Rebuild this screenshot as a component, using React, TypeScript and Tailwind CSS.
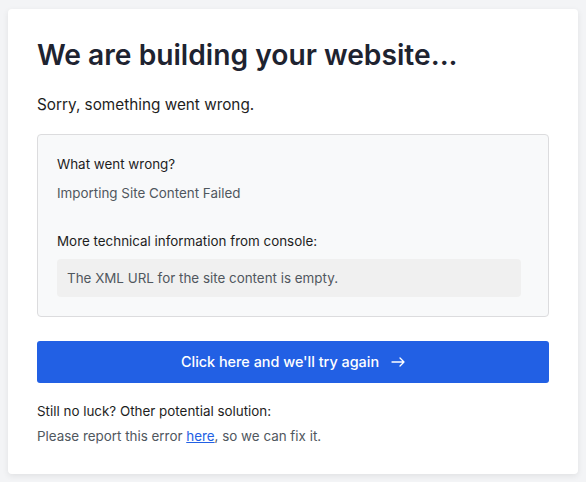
const ArrowIcon = () => (
  <svg width="14" height="10" viewBox="0 0 14 10" fill="none" stroke="currentColor" strokeWidth="1.3" strokeLinecap="round" strokeLinejoin="round">
    <path d="M1 5h12M9 1l4 4-4 4" />
  </svg>
)

const App = () => {
  return (
    <div className="min-h-screen w-full bg-[#f3f4f6] pt-[9px] pl-2 pr-2 font-['Inter',sans-serif]">
      <div className="w-[570px] rounded-[4px] bg-white px-[29px] pt-[29px] pb-[28px] shadow-[0_2px_6px_rgba(0,0,0,0.08)]">
        <h1 className="text-[28.2px] leading-[34px] font-semibold text-[#1e2330]">
          We are building your website...
        </h1>
        <p className="mt-[22px] text-[15.3px] leading-[22px] text-[#1e1e1e]">Sorry, something went wrong.</p>

        <div className="mt-[18px] rounded-[4px] border border-[#dcdcde] bg-[#f8f9fa] pl-[19px] pr-[27px] pt-[19px] pb-[19px]">
          <h3 className="text-[13.4px] leading-[20px] text-[#1e1e1e]">What went wrong?</h3>
          <p className="mt-[9px] text-[13.4px] leading-[20px] text-[#50575e]">Importing Site Content Failed</p>
          <h3 className="mt-[28px] text-[13.4px] leading-[20px] text-[#1e1e1e]">
            More technical information from console:
          </h3>
          <div className="mt-[8px] rounded-[4px] bg-[#f0f0f0] px-[10px] py-[9px] text-[13.4px] leading-[20px] text-[#50575e]">
            The XML URL for the site content is empty.
          </div>
        </div>

        <button className="mt-[24px] flex h-[42px] w-full items-center justify-center gap-[12px] rounded-[3px] bg-[#2260e4] text-[14.4px] font-medium text-white">
          Click here and we'll try again
          <ArrowIcon />
        </button>

        <p className="mt-[18px] text-[13.4px] leading-[20px] text-[#1e1e1e]">
          Still no luck? Other potential solution:
        </p>
        <p className="mt-[5px] text-[13.4px] leading-[20px] text-[#50575e]">
          Please report this error{" "}
          <a href="#" className="text-[#2260e4] underline">
            here
          </a>
          , so we can fix it.
        </p>
      </div>
    </div>
  )
}

export default App
